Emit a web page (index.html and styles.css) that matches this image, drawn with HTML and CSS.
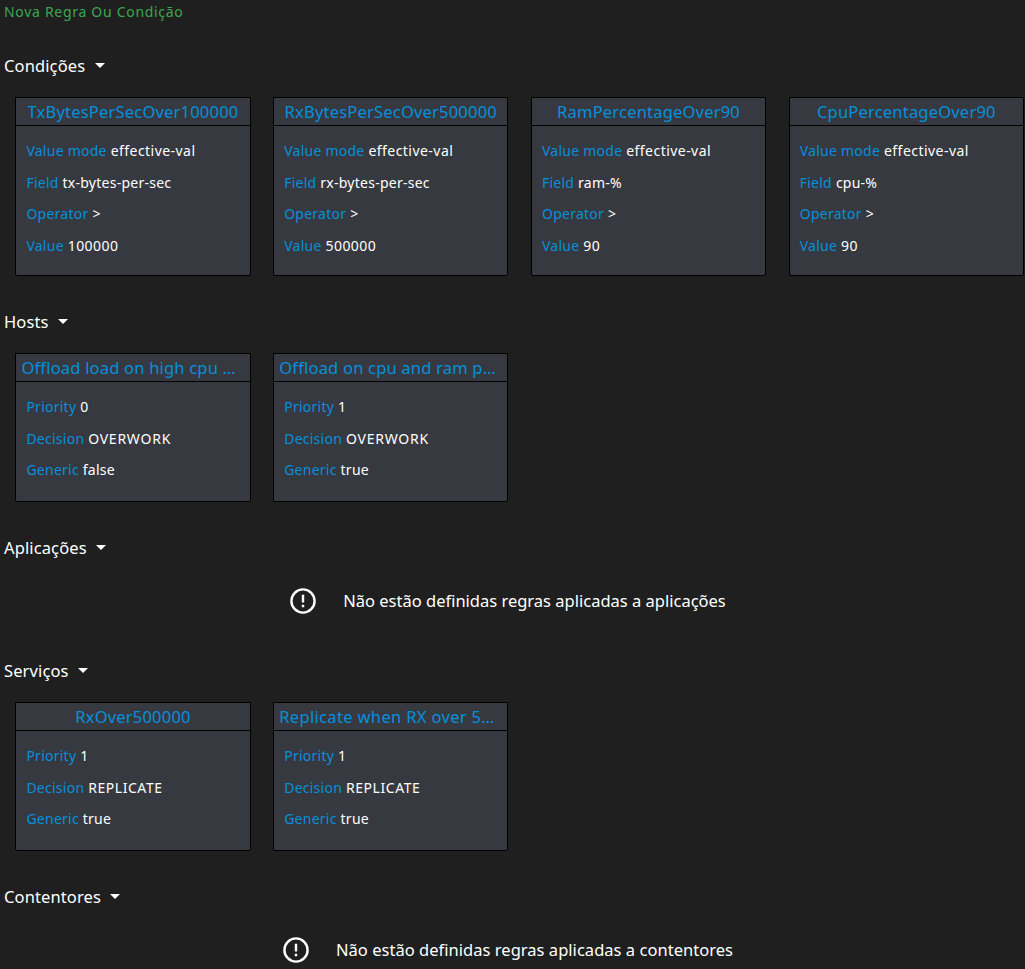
FILE: index.html
```html
<!DOCTYPE html>
<html lang="pt">
<head>
<meta charset="utf-8">
<title>Regras</title>
<link rel="stylesheet" href="styles.css">
</head>
<body>
<a class="new-link">Nova Regra Ou Condição</a>

<section class="group">
  <h2 class="group-title"><span>Condições</span><i class="caret"></i></h2>
  <div class="cards">
    <article class="card tall">
      <h3 class="card-title">TxBytesPerSecOver100000</h3>
      <div class="card-body">
        <p><b>Value mode</b> <span class="mode">effective-val</span></p>
        <p><b>Field</b> <span>tx-bytes-per-sec</span></p>
        <p><b>Operator</b> <span>&gt;</span></p>
        <p><b>Value</b> <span class="mode">100000</span></p>
      </div>
    </article>
    <article class="card tall">
      <h3 class="card-title">RxBytesPerSecOver500000</h3>
      <div class="card-body">
        <p><b>Value mode</b> <span class="mode">effective-val</span></p>
        <p><b>Field</b> <span>rx-bytes-per-sec</span></p>
        <p><b>Operator</b> <span>&gt;</span></p>
        <p><b>Value</b> <span class="mode">500000</span></p>
      </div>
    </article>
    <article class="card tall">
      <h3 class="card-title">RamPercentageOver90</h3>
      <div class="card-body">
        <p><b>Value mode</b> <span class="mode">effective-val</span></p>
        <p><b>Field</b> <span>ram-%</span></p>
        <p><b>Operator</b> <span>&gt;</span></p>
        <p><b>Value</b> <span class="mode">90</span></p>
      </div>
    </article>
    <article class="card tall">
      <h3 class="card-title">CpuPercentageOver90</h3>
      <div class="card-body">
        <p><b>Value mode</b> <span class="mode">effective-val</span></p>
        <p><b>Field</b> <span>cpu-%</span></p>
        <p><b>Operator</b> <span>&gt;</span></p>
        <p><b>Value</b> <span class="mode">90</span></p>
      </div>
    </article>
  </div>
</section>

<section class="group">
  <h2 class="group-title"><span>Hosts</span><i class="caret"></i></h2>
  <div class="cards">
    <article class="card">
      <h3 class="card-title long">Offload load on high cpu …</h3>
      <div class="card-body">
        <p><b>Priority</b> <span>0</span></p>
        <p><b>Decision</b> <span class="caps">OVERWORK</span></p>
        <p><b>Generic</b> <span>false</span></p>
      </div>
    </article>
    <article class="card">
      <h3 class="card-title long">Offload on cpu and ram p…</h3>
      <div class="card-body">
        <p><b>Priority</b> <span>1</span></p>
        <p><b>Decision</b> <span class="caps">OVERWORK</span></p>
        <p><b>Generic</b> <span>true</span></p>
      </div>
    </article>
  </div>
</section>

<section class="group">
  <h2 class="group-title"><span>Aplicações</span><i class="caret"></i></h2>
  <div class="empty">
    <svg class="empty-icon" viewBox="0 0 26 26"><circle cx="13" cy="13" r="11.6"/><path d="M13 6.7v7.7M13 16.7v2.6"/></svg>
    <span>Não estão definidas regras aplicadas a aplicações</span>
  </div>
</section>

<section class="group">
  <h2 class="group-title"><span>Serviços</span><i class="caret"></i></h2>
  <div class="cards">
    <article class="card">
      <h3 class="card-title">RxOver500000</h3>
      <div class="card-body">
        <p><b>Priority</b> <span>1</span></p>
        <p><b>Decision</b> <span class="caps tight">REPLICATE</span></p>
        <p><b>Generic</b> <span>true</span></p>
      </div>
    </article>
    <article class="card">
      <h3 class="card-title long wide">Replicate when RX over 5…</h3>
      <div class="card-body">
        <p><b>Priority</b> <span>1</span></p>
        <p><b>Decision</b> <span class="caps tight">REPLICATE</span></p>
        <p><b>Generic</b> <span>true</span></p>
      </div>
    </article>
  </div>
</section>

<section class="group">
  <h2 class="group-title"><span>Contentores</span><i class="caret"></i></h2>
  <div class="empty wide">
    <svg class="empty-icon" viewBox="0 0 26 26"><circle cx="13" cy="13" r="11.6"/><path d="M13 6.7v7.7M13 16.7v2.6"/></svg>
    <span>Não estão definidas regras aplicadas a contentores</span>
  </div>
</section>
</body>
</html>
```
FILE: styles.css
```css
* { box-sizing: border-box; }
html { overflow: hidden; background: #1f1f1f; }
body {
  margin: 0;
  height: 969px;
  overflow: hidden;
  background: #1f1f1f;
  color: #fff;
  font-family: "Noto Sans", "Open Sans", sans-serif;
}
.new-link {
  display: block;
  height: 50px;
  padding-left: 4px;
  color: #3aa851;
  font-size: 14px;
  line-height: 24px;
  letter-spacing: .7px;
  white-space: nowrap;
}
.group-title {
  display: flex;
  align-items: center;
  gap: 9.4px;
  height: 32px;
  margin: 0 0 15px;
  padding-left: 4px;
  font-size: 16.5px;
  font-weight: 400;
  line-height: 32px;
  letter-spacing: .12px;
}
.caret {
  border: 5.5px solid transparent;
  border-top: 5px solid #fff;
  border-bottom: 0;
  margin-top: -1px;
}
.cards {
  display: grid;
  grid-template-columns: repeat(4, 235.2px);
  column-gap: 22.6px;
  padding: 0 0 30px 15.4px;
}
.card {
  height: 149px;
  border: 1px solid #000;
  border-radius: 0 0 2px 2px;
  background: #373940;
}
.card.tall { height: 179px; }
.card-title {
  height: 28px;
  margin: 0;
  padding: 0 5px;
  overflow: hidden;
  border-bottom: 1px solid #000;
  color: #0590dc;
  font-size: 16.5px;
  font-weight: 400;
  line-height: 28px;
  letter-spacing: .2px;
  text-align: center;
  white-space: nowrap;
}
.card-title.long { text-align: left; }
.card-title.wide { letter-spacing: .34px; }
.card-body { padding: 9px 10px 0; }
.card-body p {
  margin: 0;
  font-size: 14px;
  line-height: 31.6px;
  letter-spacing: .25px;
  white-space: nowrap;
}
.card-body .mode { letter-spacing: .46px; }
.card-body .caps { letter-spacing: .75px; }
.card-body .tight { letter-spacing: .55px; }
.card-body b {
  color: #0590dc;
  font-weight: 400;
}
.empty {
  display: flex;
  align-items: center;
  justify-content: center;
  gap: 27px;
  height: 44px;
  margin: 0 9px 32px 0;
  font-size: 16.5px;
  white-space: nowrap;
}
.empty.wide { letter-spacing: .03px; }
.empty span { margin-top: -2px; }
.empty-icon {
  width: 26px;
  height: 26px;
  fill: none;
  stroke: #fff;
  stroke-width: 2.4;
}
```
